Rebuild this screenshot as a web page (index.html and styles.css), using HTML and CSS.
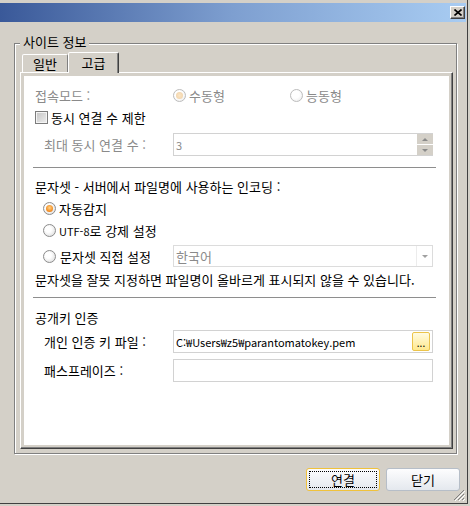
FILE: index.html
```html
<!DOCTYPE html>
<html lang="ko">
<head>
  <meta charset="UTF-8">
  <title>사이트 정보</title>
  <link rel="stylesheet" href="styles.css">
</head>
<body>

<div class="window">
  <!-- Title bar -->
  <div class="titlebar">
    <button class="close-btn" title="닫기">
      <svg width="8" height="7" viewBox="0 0 8 7"><path d="M0.5 0.5 L7.5 6.5 M7.5 0.5 L0.5 6.5" stroke="#000" stroke-width="1.6"/></svg>
    </button>
  </div>

  <!-- Site info group -->
  <div class="group">
    <span class="group-title">사이트 정보</span>

    <div class="tabs">
      <div class="tab">일반</div>
      <div class="tab active">고급</div>
    </div>

    <div class="panel">
      <div class="page">

        <div class="row disabled">
          <span class="label">접속모드 :</span>
          <label class="option"><span class="radio on"></span>수동형</label>
          <label class="option"><span class="radio"></span>능동형</label>
        </div>

        <div class="row">
          <label class="check-opt"><span class="checkbox"></span>동시 연결 수 제한</label>
        </div>

        <div class="row field-row sub disabled">
          <span class="label">최대 동시 연결 수 :</span>
          <div class="field">
            <span class="value latin">3</span>
            <div class="spin">
              <span class="spin-up"></span>
              <span class="spin-down"></span>
            </div>
          </div>
        </div>

        <div class="sep sep-first"></div>

        <div class="row heading">문자셋 - 서버에서 파일명에 사용하는 인코딩 :</div>

        <div class="row radio-row first">
          <label class="option"><span class="radio on"></span>자동감지</label>
        </div>
        <div class="row radio-row">
          <label class="option"><span class="radio"></span><span><span class="small">UTF-8</span>로 강제 설정</span></label>
        </div>
        <div class="row radio-row combo-row">
          <label class="option wide"><span class="radio"></span>문자셋 직접 설정</label>
          <div class="field combo">
            <span class="value muted">한국어</span>
            <span class="combo-arrow"></span>
          </div>
        </div>

        <div class="row notice">문자셋을 잘못 지정하면 파일명이 올바르게 표시되지 않을 수 있습니다.</div>

        <div class="sep sep-second"></div>

        <div class="row heading key-head">공개키 인증</div>

        <div class="row field-row sub key-row">
          <span class="label">개인 인증 키 파일 :</span>
          <div class="field">
            <span class="value latin">C:₩Users₩z5₩parantomatokey.pem</span>
            <button class="browse-btn">...</button>
          </div>
        </div>

        <div class="row field-row sub pass-row">
          <span class="label">패스프레이즈 :</span>
          <div class="field"></div>
        </div>

      </div>
    </div>
  </div>

  <!-- Dialog buttons -->
  <div class="actions">
    <button class="btn default">연결</button>
    <button class="btn">닫기</button>
  </div>

  <svg class="grip" width="12" height="12" viewBox="0 0 12 12">
    <path d="M11 1 L1 11 M11 5 L5 11 M11 9 L9 11" stroke="#808080" stroke-width="1"/>
    <path d="M12 2 L2 12 M12 6 L6 12 M12 10 L10 12" stroke="#ffffff" stroke-width="1"/>
  </svg>
</div>

</body>
</html>
```

FILE: styles.css
```css
* {
  box-sizing: border-box;
}

body {
  margin: 0;
  width: 470px;
  height: 506px;
  overflow: hidden;
  background: #d4d0c8;
  font-family: "Noto Sans CJK KR", "Liberation Sans", sans-serif;
  font-size: 13px;
  color: #000;
}

.window {
  position: relative;
  width: 468px;
  height: 504px;
  padding-top: 3px;
  border-right: 1px solid #404040;
  border-bottom: 1px solid #404040;
}

/* title bar */
.titlebar {
  height: 19px;
  margin-right: 1px;
  padding-right: 1px;
  display: flex;
  align-items: center;
  justify-content: flex-end;
  background: linear-gradient(to right, #3a5999, #7e9fd0 50%, #a8ccf2);
}

.close-btn {
  width: 15px;
  height: 13px;
  padding: 0;
  display: flex;
  align-items: center;
  justify-content: center;
  background: #d4d0c8;
  border: 1px solid;
  border-color: #fff #404040 #404040 #fff;
  box-shadow: inset -1px -1px #808080;
}

/* group box */
.group {
  position: relative;
  width: 443px;
  height: 411px;
  margin: 21px 0 0 14px;
  padding: 8px 3px 4px 5px;
  border: 1px solid #808080;
  box-shadow: inset 1px 1px #fff, 1px 1px #fff;
  display: flex;
  flex-direction: column;
}

.group-title {
  position: absolute;
  top: -10px;
  left: 5px;
  padding: 0 3px;
  line-height: 16px;
  background: #d4d0c8;
}

/* tabs */
.tabs {
  height: 20px;
  padding-left: 2px;
  display: flex;
  align-items: flex-end;
  position: relative;
  z-index: 1;
}

.tab {
  width: 46px;
  height: 18px;
  display: flex;
  align-items: center;
  justify-content: center;
  padding-bottom: 1px;
  border: 1px solid;
  border-bottom: none;
  border-color: #fff #808080 transparent #fff;
  border-radius: 2px 2px 0 0;
  background: #d4d0c8;
}

.tab.active {
  width: 51px;
  height: 21px;
  margin-bottom: -1px;
  padding-bottom: 2px;
  border-color: #fff #404040 transparent #fff;
  box-shadow: inset -1px 0 #808080;
}

.panel {
  height: 377px;
  padding: 3px;
  display: flex;
  background: #d4d0c8;
  border: 1px solid;
  border-color: #fff #404040 #404040 #fff;
  box-shadow: inset -1px -1px #808080;
}

.page {
  flex: 1;
  background: #fff;
  padding: 8px 0 0 11px;
}

/* rows */
.row {
  height: 22px;
  display: flex;
  align-items: center;
  white-space: nowrap;
}

.disabled {
  color: #8a8a8a;
}

.label {
  width: 138px;
  flex: none;
}

.sub {
  padding-left: 9px;
}

.sub .label {
  width: 129px;
}

.field-row {
  height: 23px;
  margin-top: 5px;
}

.option {
  width: 117px;
  display: flex;
  align-items: center;
  gap: 3px;
}

.option.wide {
  width: 130px;
  gap: 4px;
}

.small {
  font-size: 11px;
}

.check-opt {
  display: flex;
  align-items: center;
  gap: 3px;
}

.radio {
  position: relative;
  width: 13px;
  height: 13px;
  flex: none;
  border-radius: 50%;
  border: 1px solid #8c8c8c;
  background: radial-gradient(circle at 40% 40%, #fff 30%, #d6d6d6);
}

.radio.on::after {
  content: "";
  position: absolute;
  inset: 2px;
  border-radius: 50%;
  background: radial-gradient(circle at 50% 40%, #ffd488, #f28c22 65%, #d2640e);
}

.disabled .radio {
  border-color: #bcbcbc;
  background: radial-gradient(circle at 40% 40%, #fff 40%, #e6e6e6);
}

.disabled .radio.on::after {
  background: radial-gradient(circle, #fbe6c6, #efcfa4);
}

.checkbox {
  width: 13px;
  height: 13px;
  flex: none;
  border: 1px solid #7c7c7c;
  box-shadow: inset 0 0 0 1px #f4f4f4;
  background: linear-gradient(135deg, #c4c4c4, #eeeeee);
}

.field {
  width: 260px;
  height: 100%;
  padding-left: 2px;
  display: flex;
  align-items: center;
  border: 1px solid #d2d2d2;
  background: #fff;
}

.value {
  flex: 1;
}

.latin {
  font-size: 11px;
}

.muted {
  color: #8a8a8a;
}

.spin {
  width: 16px;
  height: 21px;
  margin-right: -1px;
  display: flex;
  flex-direction: column;
  background: #d4d0c8;
}

.spin-up,
.spin-down {
  flex: 1;
  display: flex;
  align-items: center;
  justify-content: center;
}

.spin-up {
  border-bottom: 1px solid #fff;
}

.spin-up::before,
.spin-down::before {
  content: "";
  border-left: 3px solid transparent;
  border-right: 3px solid transparent;
}

.spin-up::before {
  border-bottom: 3px solid #8a8a8a;
}

.spin-down::before {
  border-top: 3px solid #8a8a8a;
}

.sep {
  width: 403px;
  height: 1px;
  margin-left: -2px;
  background: #8e8e8e;
}

.sep-first {
  margin-top: 11px;
}

.heading {
  height: 20px;
  margin-top: 8px;
}

.radio-row {
  padding-left: 8px;
}

.radio-row.first {
  margin-top: 1px;
}

.combo-row {
  margin-top: 4px;
}

.combo {
  border-color: #dcdcdc;
}

.combo-arrow {
  width: 16px;
  height: 100%;
  display: flex;
  align-items: center;
  justify-content: center;
  border-left: 1px solid #ececec;
}

.combo-arrow::before {
  content: "";
  border-left: 3px solid transparent;
  border-right: 3px solid transparent;
  border-top: 3px solid #a0a0a0;
}

.notice {
  margin-top: 1px;
}

.sep-second {
  margin-top: 7px;
}

.key-head {
  margin-top: 9px;
}

.key-row {
  margin-top: 3px;
}

.pass-row {
  margin-top: 6px;
}

.browse-btn {
  width: 18px;
  height: 19px;
  margin-right: 2px;
  padding: 0 0 3px;
  display: flex;
  align-items: flex-end;
  justify-content: center;
  font: inherit;
  font-size: 10px;
  line-height: 8px;
  border: 1px solid #ecc44a;
  border-radius: 2px;
  background: linear-gradient(#fffbe2, #ffe98e);
}

/* dialog buttons */
.actions {
  display: flex;
  justify-content: flex-end;
  gap: 6px;
  margin: 14px 7px 0 0;
}

.btn {
  position: relative;
  width: 74px;
  height: 23px;
  padding: 0;
  font: inherit;
  border: 1px solid #b6bec8;
  border-radius: 3px;
  background: linear-gradient(#fdfdfe, #e4e8ee);
}

.btn.default {
  border-color: #f0c23c;
}

.btn.default::after {
  content: "";
  position: absolute;
  inset: 2px;
  border: 1px dotted #000;
}

.grip {
  position: absolute;
  right: 2px;
  bottom: 2px;
}
```
